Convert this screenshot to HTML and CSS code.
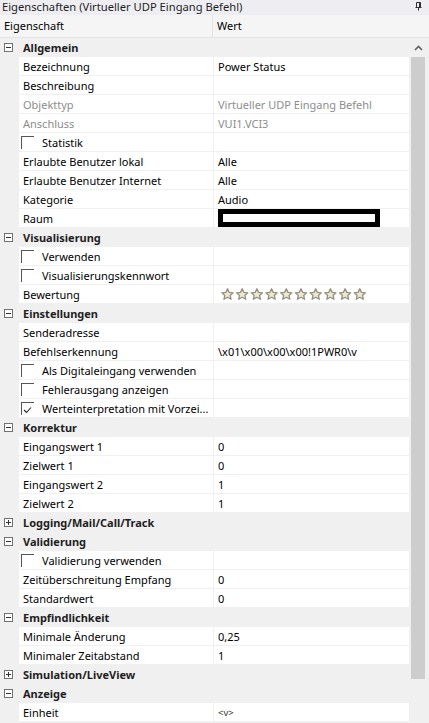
FILE: index.html
```html
<!DOCTYPE html>
<html>
<head>
<meta charset="utf-8">
<link rel="stylesheet" href="styles.css">
</head>
<body>
<div class="window">
  <div class="title">
    <span>Eigenschaften (Virtueller UDP Eingang Befehl)</span>
    <svg class="pin" width="7" height="9" viewBox="0 0 7 9"><path d="M0.5 5.5h6M1.5 0.5h4v5h-4zM4.5 0.5v5M3.5 5.5v3" fill="none" stroke="#333" stroke-width="1"/></svg>
  </div>
  <div class="header">
    <div class="h-name">Eigenschaft</div>
    <div class="h-val">Wert</div>
  </div>
  <div class="body">
    <div class="grid">
      <div class="cat"><span class="tog minus"></span>Allgemein</div>
      <div class="row"><div class="name">Bezeichnung</div><div class="val">Power Status</div></div>
      <div class="row"><div class="name">Beschreibung</div><div class="val"></div></div>
      <div class="row dis"><div class="name">Objekttyp</div><div class="val">Virtueller UDP Eingang Befehl</div></div>
      <div class="row dis"><div class="name">Anschluss</div><div class="val">VUI1.VCI3</div></div>
      <div class="row"><div class="name"><span class="cb"></span>Statistik</div><div class="val"></div></div>
      <div class="row"><div class="name">Erlaubte Benutzer lokal</div><div class="val">Alle</div></div>
      <div class="row"><div class="name">Erlaubte Benutzer Internet</div><div class="val">Alle</div></div>
      <div class="row"><div class="name">Kategorie</div><div class="val">Audio</div></div>
      <div class="row"><div class="name">Raum</div><div class="val"><span class="redact"></span></div></div>

      <div class="cat"><span class="tog minus"></span>Visualisierung</div>
      <div class="row"><div class="name"><span class="cb"></span>Verwenden</div><div class="val"></div></div>
      <div class="row"><div class="name"><span class="cb"></span>Visualisierungskennwort</div><div class="val"></div></div>
      <div class="row"><div class="name">Bewertung</div><div class="val stars">
        <svg width="150" height="13" viewBox="0 0 150 13">
          <defs><path id="st" d="M6.5 0.8l1.7 3.6 3.9 0.4-2.9 2.6 0.9 3.9-3.6-2-3.6 2 0.9-3.9L0.9 4.8l3.9-0.4z" fill="#ebe6d6" stroke="#958f7a" stroke-width="1.3" stroke-linejoin="round"/></defs>
          <use href="#st" x="0"/><use href="#st" x="14.7"/><use href="#st" x="29.4"/><use href="#st" x="44.1"/><use href="#st" x="58.8"/><use href="#st" x="73.5"/><use href="#st" x="88.2"/><use href="#st" x="102.9"/><use href="#st" x="117.6"/><use href="#st" x="132.3"/>
        </svg></div></div>

      <div class="cat"><span class="tog minus"></span>Einstellungen</div>
      <div class="row"><div class="name">Senderadresse</div><div class="val"></div></div>
      <div class="row"><div class="name">Befehlserkennung</div><div class="val">\x01\x00\x00\x00!1PWR0\v</div></div>
      <div class="row"><div class="name"><span class="cb"></span>Als Digitaleingang verwenden</div><div class="val"></div></div>
      <div class="row"><div class="name"><span class="cb"></span>Fehlerausgang anzeigen</div><div class="val"></div></div>
      <div class="row"><div class="name"><span class="cb checked"><svg width="9" height="8" viewBox="0 0 9 8"><path d="M1 4l2.5 2.5L8 1.5" fill="none" stroke="#222" stroke-width="1.1"/></svg></span>Werteinterpretation mit Vorzei...</div><div class="val"></div></div>

      <div class="cat"><span class="tog minus"></span>Korrektur</div>
      <div class="row"><div class="name">Eingangswert 1</div><div class="val">0</div></div>
      <div class="row"><div class="name">Zielwert 1</div><div class="val">0</div></div>
      <div class="row"><div class="name">Eingangswert 2</div><div class="val">1</div></div>
      <div class="row"><div class="name">Zielwert 2</div><div class="val">1</div></div>

      <div class="cat"><span class="tog plus"></span>Logging/Mail/Call/Track</div>

      <div class="cat"><span class="tog minus"></span>Validierung</div>
      <div class="row"><div class="name"><span class="cb"></span>Validierung verwenden</div><div class="val"></div></div>
      <div class="row"><div class="name">Zeitüberschreitung Empfang</div><div class="val">0</div></div>
      <div class="row"><div class="name">Standardwert</div><div class="val">0</div></div>

      <div class="cat"><span class="tog minus"></span>Empfindlichkeit</div>
      <div class="row"><div class="name">Minimale Änderung</div><div class="val">0,25</div></div>
      <div class="row"><div class="name">Minimaler Zeitabstand</div><div class="val">1</div></div>

      <div class="cat"><span class="tog plus"></span>Simulation/LiveView</div>

      <div class="cat"><span class="tog minus"></span>Anzeige</div>
      <div class="row"><div class="name">Einheit</div><div class="val small">&lt;v&gt;</div></div>
    </div>
    <div class="scrollbar">
      <div class="arrow"><svg width="9" height="6" viewBox="0 0 9 6"><path d="M1 5l3.5-3.5L8 5" fill="none" stroke="#606060" stroke-width="1.6"/></svg></div>
      <div class="thumb"></div>
    </div>
  </div>
</div>
</body>
</html>
```
FILE: styles.css
```css
* { box-sizing: border-box; }
html, body { margin: 0; padding: 0; }
body {
  width: 429px;
  height: 723px;
  overflow: hidden;
  background: #f0f0f0;
  font-family: "Noto Sans", "Open Sans", sans-serif;
  font-size: 11px;
  color: #000;
}
.window { width: 429px; height: 723px; display: flex; flex-direction: column; }
.title {
  height: 15px;
  flex-shrink: 0;
  display: flex;
  align-items: flex-start;
  justify-content: space-between;
  padding: 0 7px 0 2px;
  background: #eeeef2;
  line-height: 14px;
  font-size: 11.2px;
  color: #1e1e1e;
}
.title .pin { margin-top: 2px; }
.header {
  height: 23px;
  flex-shrink: 0;
  display: flex;
  background: #f5f5f5;
  border-bottom: 1px solid #e3e3e3;
}
.h-name { width: 213px; padding-left: 4px; line-height: 22px; border-right: 1px solid #e3e3e3; }
.h-val { padding-left: 4px; line-height: 22px; }
.body { flex: 1; display: flex; overflow: hidden; }
.grid { width: 409px; display: flex; flex-direction: column; }
.cat {
  height: 19px;
  flex-shrink: 0;
  display: flex;
  align-items: center;
  font-weight: bold;
  color: #1e1e1e;
  background: #f0f0f0;
  padding-left: 4px;
}
.tog {
  width: 9px;
  height: 9px;
  border: 1px solid #717171;
  margin-right: 10px;
  position: relative;
  background: #fff;
}
.tog::before {
  content: "";
  position: absolute;
  left: 1px; top: 3px;
  width: 5px; height: 1px;
  background: #333;
}
.tog.plus::after {
  content: "";
  position: absolute;
  left: 3px; top: 1px;
  width: 1px; height: 5px;
  background: #333;
}
.row {
  height: 19px;
  flex-shrink: 0;
  margin-left: 19px;
  display: grid;
  grid-template-columns: 195px 195px;
  background: #fff;
}
.name, .val {
  display: flex;
  align-items: center;
  border-bottom: 1px solid #f0f0f0;
  white-space: nowrap;
  overflow: hidden;
}
.name { padding-left: 4px; border-right: 1px solid #f0f0f0; }
.val { padding-left: 4px; }
.dis .name, .dis .val { color: #8d8d8d; }
.cb {
  flex-shrink: 0;
  width: 13px;
  height: 13px;
  border-top: 1px solid #555;
  border-left: 1px solid #555;
  margin-left: -2px;
  margin-right: 8px;
  display: flex;
  align-items: flex-end;
  justify-content: flex-start;
  padding: 0 0 1px 1px;
}
.redact {
  flex-shrink: 0;
  display: block;
  width: 162px;
  height: 18px;
  border: 5px solid #000;
  background: #fff;
}
.stars { padding-left: 7px; }
.stars svg { display: block; }
.small { font-size: 9.5px; color: #333; }
.scrollbar {
  width: 20px;
  padding-left: 2px;
  display: flex;
  flex-direction: column;
}
.arrow { height: 19px; width: 14px; display: flex; align-items: center; justify-content: center; }
.thumb { width: 14px; height: 622px; background: #cdcdcd; }
```
